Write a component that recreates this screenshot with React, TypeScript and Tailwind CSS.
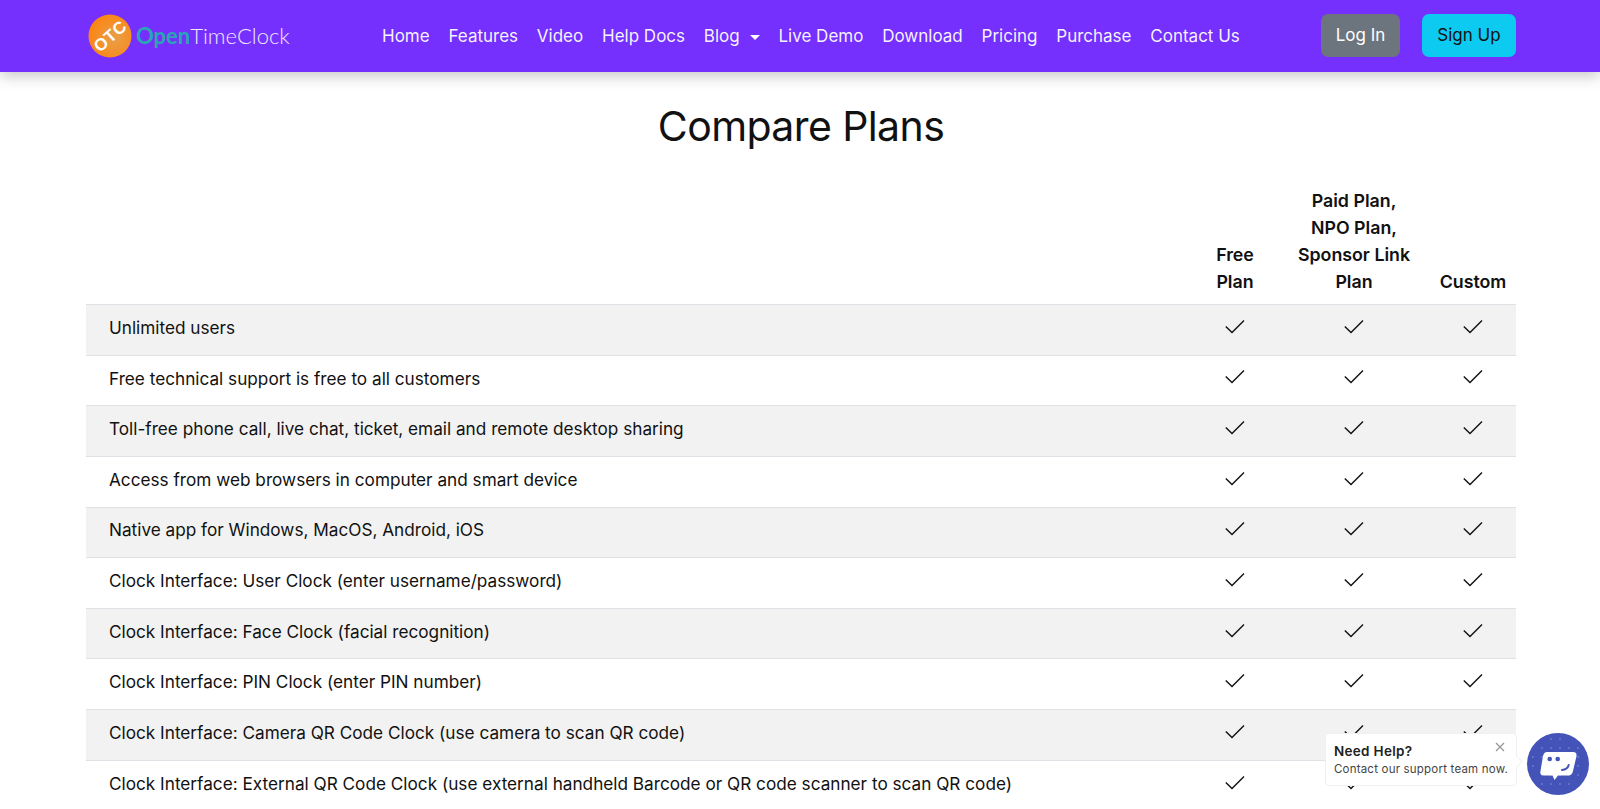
import React from "react";

const rows = [
  "Unlimited users",
  "Free technical support is free to all customers",
  "Toll-free phone call, live chat, ticket, email and remote desktop sharing",
  "Access from web browsers in computer and smart device",
  "Native app for Windows, MacOS, Android, iOS",
  "Clock Interface: User Clock (enter username/password)",
  "Clock Interface: Face Clock (facial recognition)",
  "Clock Interface: PIN Clock (enter PIN number)",
  "Clock Interface: Camera QR Code Clock (use camera to scan QR code)",
  "Clock Interface: External QR Code Clock (use external handheld Barcode or QR code scanner to scan QR code)",
];

const links = ["Home", "Features", "Video", "Help Docs", "Blog", "Live Demo", "Download", "Pricing", "Purchase", "Contact Us"];

function Check() {
  return (
    <svg width="24" height="24" viewBox="0 0 24 24" fill="none" className="block mb-[6px]">
      <path d="M2.8 11.6 L9 17.6 L21 5.4" stroke="#111" strokeWidth="1.4" />
    </svg>
  );
}

function Logo() {
  return (
    <div className="flex items-center">
      <svg width="44" height="44" viewBox="0 0 44 44">
        <defs>
          <radialGradient id="og" cx="60%" cy="55%" r="60%">
            <stop offset="0%" stopColor="#e9a04a" />
            <stop offset="100%" stopColor="#fb8512" />
          </radialGradient>
        </defs>
        <circle cx="22" cy="22" r="21.5" fill="url(#og)" />
        <text
          x="22"
          y="28"
          textAnchor="middle"
          transform="rotate(-42 22 22)"
          fontFamily="Liberation Sans, sans-serif"
          fontSize="17"
          fontWeight="700"
          fill="#fff"
          letterSpacing="0.5"
        >
          OTC
        </text>
      </svg>
      <span className="ml-[4px] text-[22px] leading-none font-['Lato',sans-serif]">
        <span className="font-bold text-[#2ba5b5]">Open</span>
        <span className="font-light text-[#efe6ff]">TimeClock</span>
      </span>
    </div>
  );
}

function ChatWidget() {
  const dots: [number, number][] = [];
  for (let y = 6; y < 62; y += 9) {
    for (let x = 6; x < 62; x += 9) {
      if ((x - 31) ** 2 + (y - 31) ** 2 < 27 * 27) dots.push([x, y]);
    }
  }
  return (
    <div className="absolute right-[11px] bottom-[14px] flex items-start gap-[10px] font-['Inter',sans-serif]">
      <div className="relative w-[192px] h-[53px] bg-white rounded-[4px] border border-[#f0f0f2] pl-[8px] pt-[8px] text-[#222]">
        <div className="text-[13.5px] leading-[18px] font-semibold tracking-[0.3px]">Need Help?</div>
        <div className="text-[11.5px] leading-[18px] text-[#444] whitespace-nowrap tracking-[0.2px]">Contact our support team now.</div>
        <svg width="12" height="12" viewBox="0 0 12 12" className="absolute right-[10px] top-[7px]">
          <path d="M2 2 L10 10 M10 2 L2 10" stroke="#999" strokeWidth="1.3" />
        </svg>
        <div className="absolute right-[-5px] top-[23px] w-[9px] h-[9px] rotate-45 bg-white border-t border-r border-[#f0f0f2]" />
      </div>
      <div className="w-[62px] h-[62px] rounded-full bg-[#4353b8]">
        <svg width="62" height="62" viewBox="0 0 62 62">
          {dots.map(([x, y]) => (
            <circle key={`${x}-${y}`} cx={x} cy={y} r="1" fill="#6b78cc" />
          ))}
          <path
            d="M20 19 H46 Q50 19 49.5 23 L46 38 Q45 42.5 41 42.5 H31 L27.5 47 L25.5 42.5 H17 Q12.5 42.5 13.5 38 L16 23 Q17 19 20 19 Z"
            fill="#fff"
          />
          <circle cx="22.7" cy="26" r="2.3" fill="#4353b8" />
          <circle cx="30.7" cy="26" r="2.3" fill="#4353b8" />
          <path d="M35 37 Q40.5 36.5 41.7 32" fill="none" stroke="#4353b8" strokeWidth="2" strokeLinecap="round" />
        </svg>
      </div>
    </div>
  );
}

export default function App() {
  return (
    <div className="relative h-[809px] w-[1600px] overflow-hidden bg-white text-[#111] font-['Inter',sans-serif]">
      <header className="relative z-10 h-[72px] bg-[#7630fe] shadow-[0_4px_14px_rgba(0,0,0,0.22)] flex items-center pl-[88px] pr-[84px]">
        <div className="w-[294px]">
          <Logo />
        </div>
        <nav className="flex items-center gap-[18.8px] text-[17px] text-white/95 pt-[2px]">
          {links.map((l) => (
            <span key={l} className="flex items-center whitespace-nowrap">
              {l}
              {l === "Blog" && <span className="ml-[10px] w-0 h-0 border-x-[5px] border-x-transparent border-t-[5px] border-t-white" />}
            </span>
          ))}
        </nav>
        <div className="ml-auto flex items-center gap-[22px] text-[17px] pb-[2px]">
          <button className="h-[43px] w-[79px] rounded-[7px] bg-[#6c757d] text-white pt-[1px]">Log In</button>
          <button className="h-[43px] w-[94px] rounded-[7px] bg-[#0dcaf0] text-[#111] pt-[1px]">Sign Up</button>
        </div>
      </header>

      <main className="mx-[86px] w-[1430px]">
        <h1 className="mt-[28px] text-center text-[41px] leading-[53px] font-normal tracking-[-0.6px]">Compare Plans</h1>
        <div className="mt-[25px] flex items-end text-[17.8px] leading-[27px] font-semibold text-center pb-[9px] h-[126px]">
          <div className="flex-1" />
          <div className="w-[86px]">Free<br />Plan</div>
          <div className="w-[152px]">Paid Plan,<br />NPO Plan,<br />Sponsor Link<br />Plan</div>
          <div className="w-[86px]">Custom</div>
        </div>
        <div className="border-t border-[#dee2e6]">
          {rows.map((r, i) => (
            <div
              key={r}
              className={`flex items-center h-[50.65px] border-b border-[#dee2e6] text-[17.2px] ${i % 2 === 0 ? "bg-[#f2f2f2]" : "bg-white"}`}
            >
              <div className="flex-1 pl-[23px] pb-[4px] whitespace-nowrap">{r}</div>
              {[0, 1, 2].map((c) => (
                <div key={c} className={`flex justify-center ${c === 1 ? "w-[152px]" : "w-[86px]"}`}>
                  <Check />
                </div>
              ))}
            </div>
          ))}
        </div>
      </main>
      <ChatWidget />
    </div>
  );
}
